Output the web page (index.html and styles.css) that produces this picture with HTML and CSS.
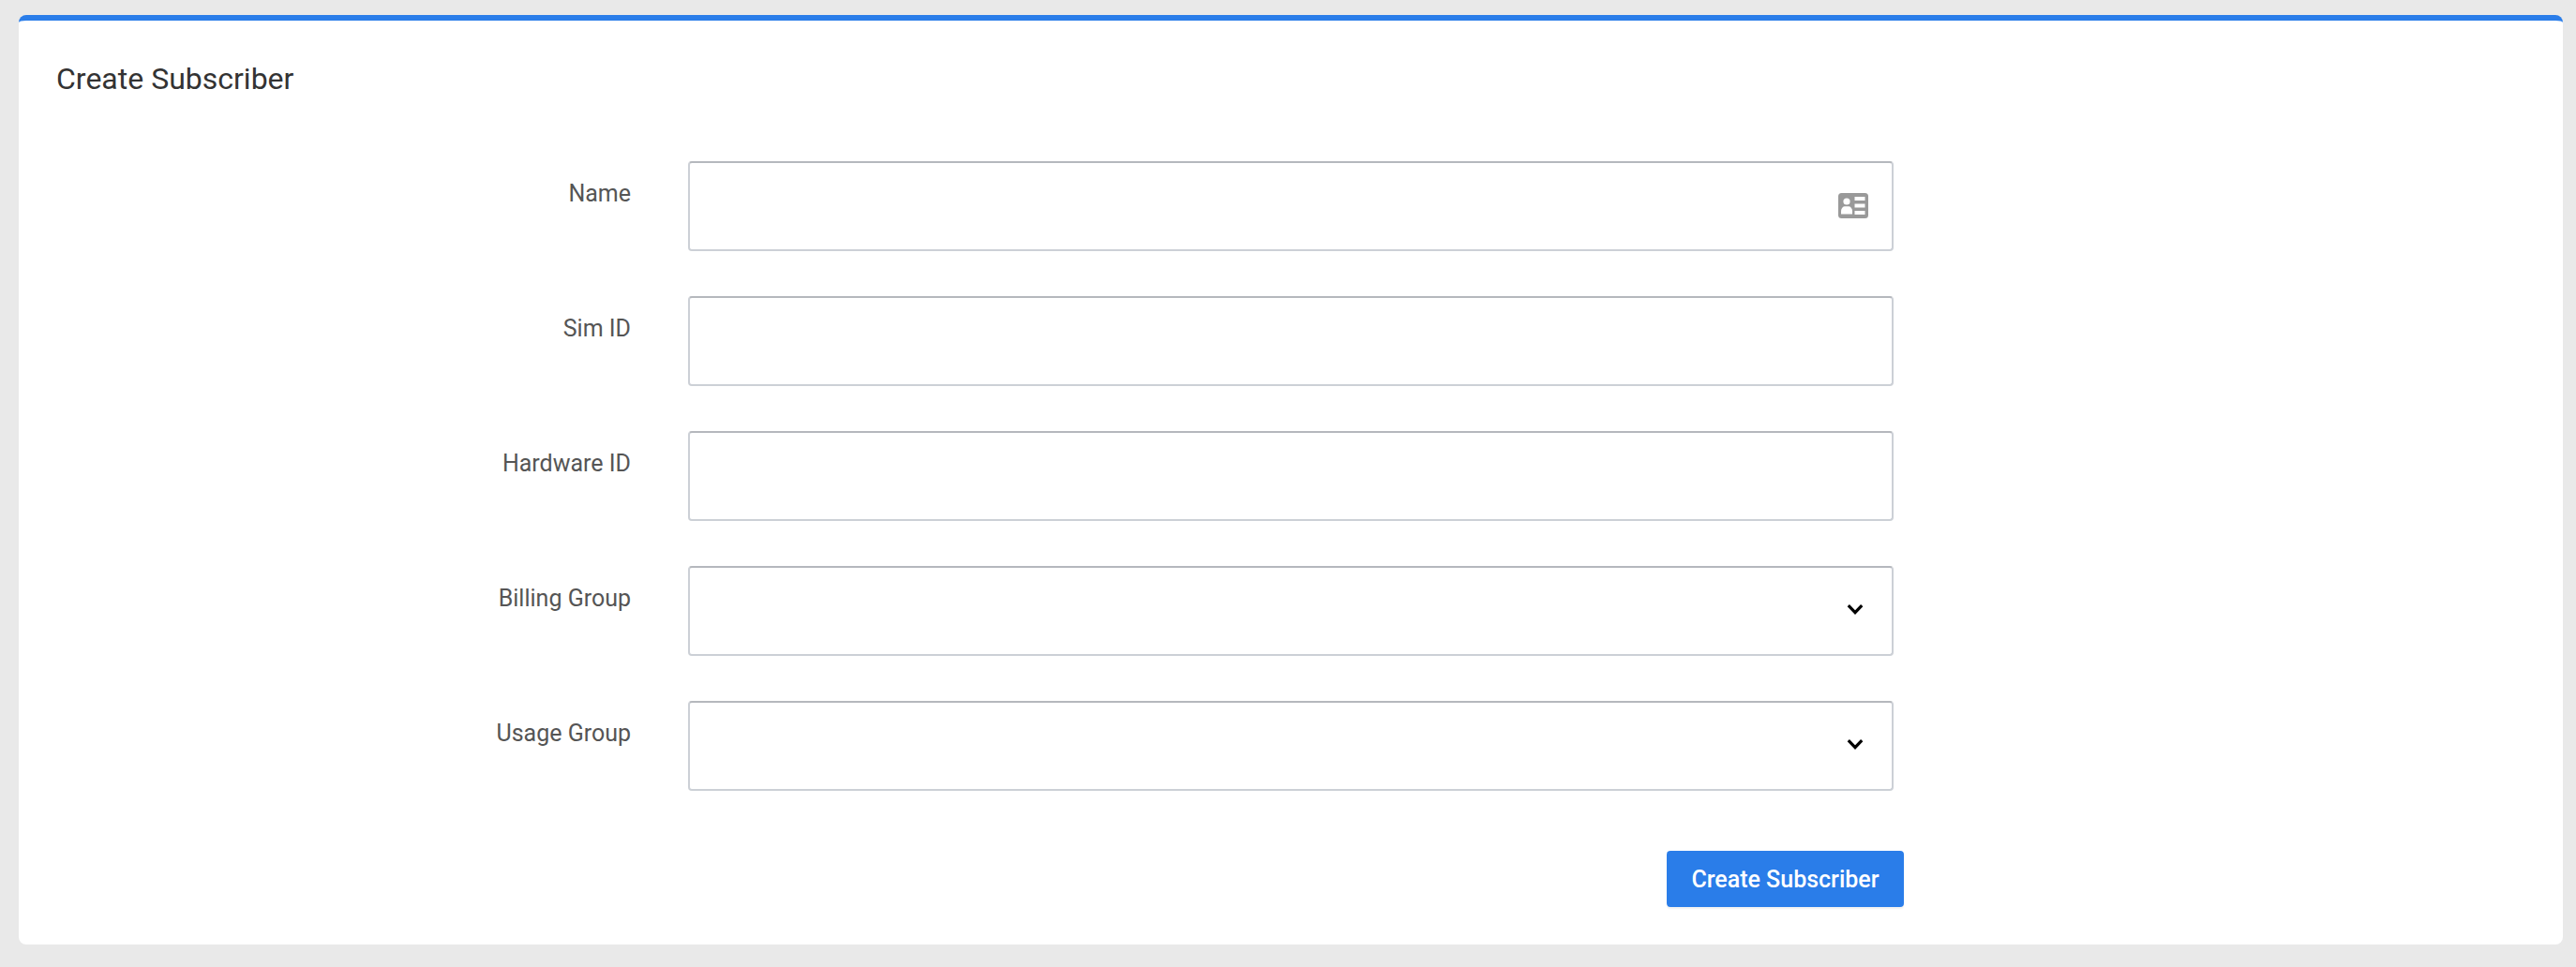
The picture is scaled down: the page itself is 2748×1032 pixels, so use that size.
FILE: index.html
```html
<!DOCTYPE html>
<html lang="en">
<head>
    <meta charset="UTF-8">
    <meta name="viewport" content="width=device-width, initial-scale=1.0">
    <title>Create Subscriber</title>
    <link rel="stylesheet" href="styles.css">
</head>
<body>

    <div class="card">
        <h1 class="card-title">Create Subscriber</h1>

        <form class="form">
            <div class="form-row">
                <label for="name">Name</label>
                <div class="field">
                    <input type="text" id="name">
                    <svg class="field-icon id-icon" viewBox="0 0 32 27" aria-hidden="true">
                        <rect width="32" height="27" rx="3.5" fill="#999"/>
                        <circle cx="9" cy="9" r="3.6" fill="#fff"/>
                        <path d="M3 22.5v-3.2c0-3 2-5 4-5h4c2 0 4 2 4 5v3.2z" fill="#fff"/>
                        <path d="M17.5 4h11v4h-11zM17.5 11.5h11v4h-11zM17.5 19h11v4h-11z" fill="#fff"/>
                    </svg>
                </div>
            </div>
            <div class="form-row">
                <label for="simId">Sim ID</label>
                <div class="field"><input type="text" id="simId"></div>
            </div>
            <div class="form-row">
                <label for="hardwareId">Hardware ID</label>
                <div class="field"><input type="text" id="hardwareId"></div>
            </div>
            <div class="form-row">
                <label for="billingGroup">Billing Group</label>
                <div class="field">
                    <input type="text" id="billingGroup">
                    <svg class="field-icon chevron" viewBox="0 0 18 13" aria-hidden="true">
                        <path d="M1.8 2.2 9 9.6l7.2-7.4" fill="none" stroke="#000" stroke-width="3.2"/>
                    </svg>
                </div>
            </div>
            <div class="form-row">
                <label for="usageGroup">Usage Group</label>
                <div class="field">
                    <input type="text" id="usageGroup">
                    <svg class="field-icon chevron" viewBox="0 0 18 13" aria-hidden="true">
                        <path d="M1.8 2.2 9 9.6l7.2-7.4" fill="none" stroke="#000" stroke-width="3.2"/>
                    </svg>
                </div>
            </div>
            <div class="form-actions">
                <button type="button" class="btn-primary">Create Subscriber</button>
            </div>
        </form>
    </div>

</body>
</html>
```

FILE: styles.css
```css
* {
    box-sizing: border-box;
}

body {
    margin: 0;
    padding: 16px 14px 24px 20px;
    height: 1032px;
    background-color: #e9e9e9;
    font-family: 'Roboto', sans-serif;
}

.card {
    height: 992px;
    padding: 40px 40px 0;
    background-color: #fff;
    border-top: 6px solid #2a7de9;
    border-radius: 8px;
}

.card-title {
    margin: 0;
    font-size: 32px;
    line-height: 44px;
    font-weight: 400;
    color: #333;
}

.form {
    margin-top: 66px;
    width: 1971px;
}

.form-row {
    display: flex;
    margin-bottom: 48px;
}

.form-row label {
    width: 613px;
    margin-right: 61px;
    padding-top: 20px;
    text-align: right;
    font-size: 25px;
    line-height: 30px;
    color: #555;
}

.field {
    position: relative;
    width: 1286px;
}

.field input {
    display: block;
    width: 100%;
    height: 96px;
    padding: 0 20px;
    background-color: #fff;
    border: 2px solid #ccd0d6;
    border-top-color: #b5b8bd;
    border-radius: 4px;
    font-family: inherit;
    font-size: 25px;
    outline: none;
}

.field-icon {
    position: absolute;
}

.id-icon {
    top: 34px;
    right: 27px;
    width: 32px;
    height: 27px;
}

.chevron {
    top: 40px;
    right: 32px;
    width: 18px;
    height: 13px;
}

.form-actions {
    display: flex;
    justify-content: flex-end;
    margin-top: 64px;
}

.btn-primary {
    width: 253px;
    height: 60px;
    padding: 0;
    background-color: #2a7de9;
    border: none;
    border-radius: 4px;
    box-shadow: 0 2px 2px rgba(0, 0, 0, 0.06);
    color: #fff;
    font-family: inherit;
    font-size: 25px;
    font-weight: 500;
    cursor: pointer;
}
```
